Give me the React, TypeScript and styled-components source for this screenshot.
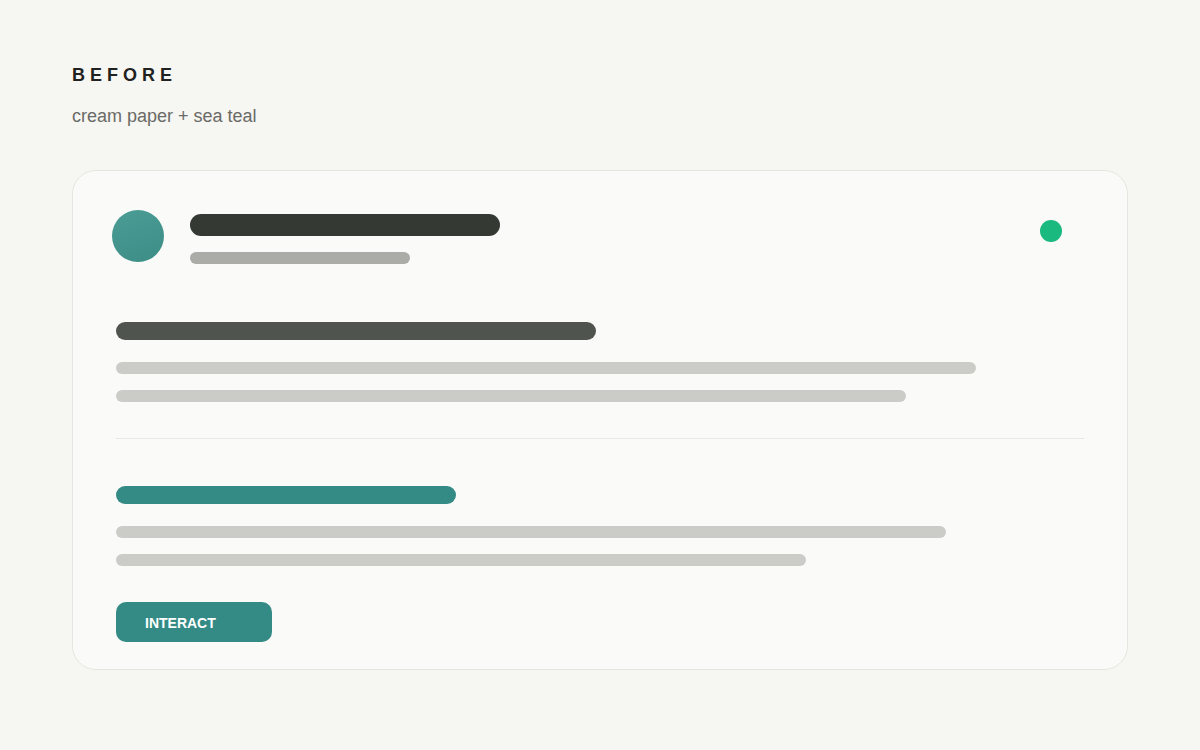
import styled, { createGlobalStyle } from "styled-components";

const GlobalStyle = createGlobalStyle`
  html, body {
    margin: 0;
    padding: 0;
    background: #f6f6f2;
  }
  body {
    font-family: "Liberation Sans", Arial, sans-serif;
  }
`;

const Page = styled.main`
  width: 1200px;
  height: 750px;
  box-sizing: border-box;
  padding: 66px 72px 0 72px;
`;

const Eyebrow = styled.h1`
  margin: 0;
  font-size: 18px;
  line-height: 18px;
  font-weight: 700;
  letter-spacing: 5px;
  color: #1f221e;
`;

const Caption = styled.p`
  margin: 22px 0 0 0;
  font-size: 18px;
  line-height: 20px;
  color: #6a6a66;
`;

const Card = styled.section`
  margin-top: 44px;
  width: 1056px;
  height: 500px;
  box-sizing: border-box;
  border: 1px solid #e6e6e1;
  border-radius: 24px;
  background: #fafaf8;
  padding: 39px 43px 0 43px;
`;

const Header = styled.div`
  display: flex;
  align-items: flex-start;
  margin-left: -4px;
`;

const Avatar = styled.div`
  width: 52px;
  height: 52px;
  border-radius: 50%;
  flex: none;
  background: linear-gradient(160deg, #4c9c96 0%, #3b8d86 100%);
`;

const TitleBlock = styled.div`
  display: flex;
  flex-direction: column;
  gap: 16px;
  margin: 4px 0 0 26px;
  flex: 1;
`;

const StatusDot = styled.span`
  width: 22px;
  height: 22px;
  border-radius: 50%;
  background: #19b980;
  margin: 10px 22px 0 0;
  flex: none;
`;

const Bar = styled.div<{ $w: number; $h: number; $c: string }>`
  width: ${(p) => p.$w}px;
  height: ${(p) => p.$h}px;
  border-radius: ${(p) => p.$h / 2}px;
  background: ${(p) => p.$c};
`;

const Section = styled.div<{ $top: number }>`
  display: flex;
  flex-direction: column;
  margin-top: ${(p) => p.$top}px;
`;

const Lines = styled.div`
  display: flex;
  flex-direction: column;
  gap: 16px;
  margin-top: 22px;
`;

const Divider = styled.hr`
  margin: 36px 0 0 0;
  border: none;
  border-top: 1px solid #e8e8e4;
  height: 0;
`;

const Button = styled.button`
  margin-top: 36px;
  width: 156px;
  height: 40px;
  border: none;
  border-radius: 10px;
  background: #348b85;
  color: #ffffff;
  font-family: "Liberation Sans", Arial, sans-serif;
  font-size: 14px;
  font-weight: 700;
  letter-spacing: 0;
  text-align: left;
  padding: 2px 0 0 29px;
  cursor: pointer;
`;

const LINE = "#cbcbc8";

const App = () => {
  return (
    <>
      <GlobalStyle />
      <Page>
        <Eyebrow>BEFORE</Eyebrow>
        <Caption>cream paper + sea teal</Caption>
        <Card>
          <Header>
            <Avatar />
            <TitleBlock>
              <Bar $w={310} $h={22} $c="#343a33" />
              <Bar $w={220} $h={12} $c="#ababa8" />
            </TitleBlock>
            <StatusDot />
          </Header>

          <Section $top={58}>
            <Bar $w={480} $h={18} $c="#4f554e" />
            <Lines>
              <Bar $w={860} $h={12} $c={LINE} />
              <Bar $w={790} $h={12} $c={LINE} />
            </Lines>
          </Section>

          <Divider />

          <Section $top={47}>
            <Bar $w={340} $h={18} $c="#348b85" />
            <Lines>
              <Bar $w={830} $h={12} $c={LINE} />
              <Bar $w={690} $h={12} $c={LINE} />
            </Lines>
          </Section>

          <Button>INTERACT</Button>
        </Card>
      </Page>
    </>
  );
};

export default App;
